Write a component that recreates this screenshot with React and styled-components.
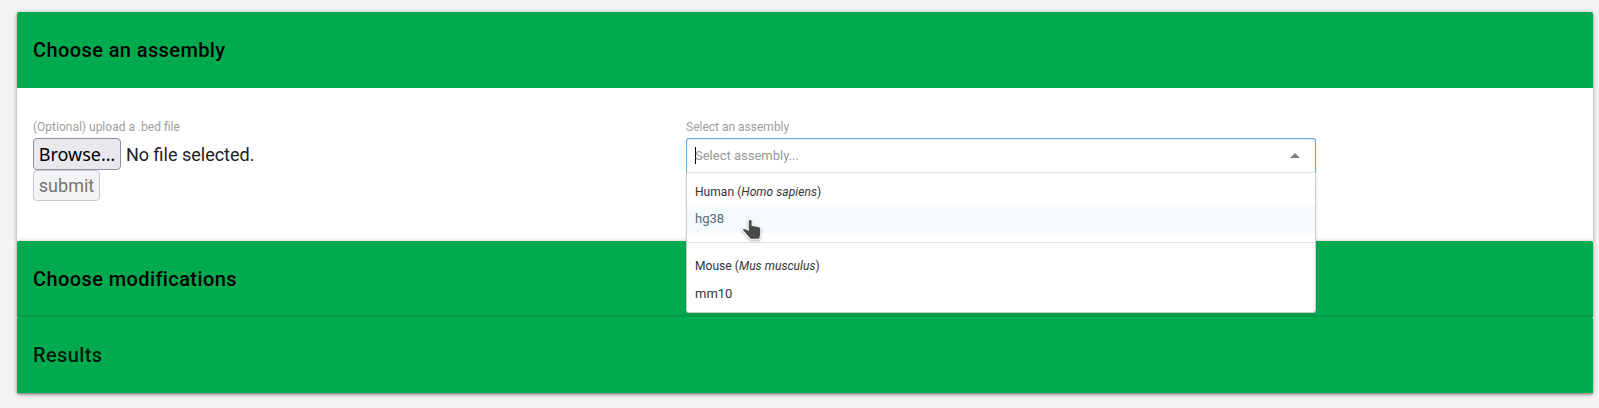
import React from "react";
import styled, { createGlobalStyle } from "styled-components";

const GlobalStyle = createGlobalStyle`
  * { box-sizing: border-box; }
  body {
    margin: 0;
    background: #f4f4f4;
    color: #212121;
    font-family: Roboto, "Liberation Sans", sans-serif;
  }
`;

const Page = styled.main`
  height: 408px;
  padding: 12px 6px 0 17px;
  overflow: hidden;
`;

const Panel = styled.section`
  background: #fff;
  border-radius: 2px 2px 0 0;
  box-shadow: 0 1px 5px 0 rgba(0, 0, 0, 0.35), 0 2px 2px 0 rgba(0, 0, 0, 0.14),
    0 3px 1px -2px rgba(0, 0, 0, 0.12);
`;

const PanelHeader = styled.header`
  display: flex;
  align-items: center;
  height: 76px;
  padding: 0 16px;
  background: #00ab50;
  border-radius: 2px 2px 0 0;
`;

const PanelTitle = styled.h2`
  margin: 0;
  font-size: 20px;
  font-weight: 500;
  line-height: 28px;
  letter-spacing: 0.4px;
  color: ${(p) => (p.$soft ? "rgba(0, 0, 0, 0.87)" : "#000")};
`;

const PanelBody = styled.div`
  display: grid;
  grid-template-columns: 653px 630px;
  height: 153px;
  padding: 30px 16px 0;
`;

const Field = styled.div`
  display: flex;
  flex-direction: column;
  align-items: flex-start;
`;

const Label = styled.label`
  height: 20px;
  line-height: 18px;
  font-size: 12px;
  color: #9e9e9e;
`;

const FileRow = styled.div`
  display: flex;
  align-items: center;
  gap: 5px;
  height: 32px;
  font-size: 18px;
  white-space: nowrap;
`;

const FormButton = styled.button`
  display: flex;
  align-items: center;
  justify-content: center;
  width: ${(p) => p.$width};
  height: ${(p) => p.$height};
  padding: 0;
  border: 1px solid #8f8f9d;
  border-radius: 4px;
  background: #e9e9ed;
  color: #000;
  font: 18px ${(p) => p.$family || "Roboto"}, sans-serif;
  white-space: nowrap;

  &:disabled {
    border-color: #c7c7ce;
    background: #f4f4f6;
    color: #757575;
  }
`;

const Select = styled.div`
  position: relative;
  width: 630px;
  font-size: 13px;
`;

const Control = styled.div`
  display: flex;
  align-items: center;
  height: 35px;
  padding: 0 15px 0 8px;
  border: 1px solid #5fa9e6;
  border-bottom-color: #e6e6e6;
  border-radius: 3px 3px 0 0;
  box-shadow: inset 0 1px 2px rgba(0, 0, 0, 0.1);
  background: #fff;
`;

const Caret = styled.span`
  width: 1px;
  height: 17px;
  margin-right: -1px;
  background: #000;
`;

const Placeholder = styled.span`
  flex: 1;
  color: #999;
`;

const Arrow = styled.span`
  border: 5px solid transparent;
  border-top: 0;
  border-bottom-color: #808080;
  margin-top: -1px;
`;

const Menu = styled.div`
  position: absolute;
  z-index: 2;
  top: 35px;
  left: 0;
  width: 100%;
  height: 140px;
  border: 1px solid #ccc;
  border-top: 0;
  border-radius: 0 0 3px 3px;
  background: #fff;
  box-shadow: 0 1px 3px rgba(0, 0, 0, 0.12);
`;

const Group = styled.div`
  height: ${(p) => (p.$divided ? "70px" : "69px")};
  padding-top: ${(p) => (p.$divided ? "9px" : "4px")};
  border-top: ${(p) => (p.$divided ? "1px solid #e0e0e0" : "0")};
`;

const GroupTitle = styled.div`
  height: 28px;
  padding: 0 8px;
  line-height: ${(p) => (p.$lowered ? "31px" : "29px")};
  font-size: 12px;
  color: #333;
  letter-spacing: 0.05px;
`;

const Option = styled.div`
  height: 28px;
  padding: 0 8px;
  line-height: 27px;
  color: ${(p) => (p.$focused ? "#556b78" : "#333")};
  background: ${(p) => (p.$focused ? "#f5fafd" : "transparent")};
`;

const Pointer = styled.svg`
  position: absolute;
  z-index: 3;
  top: 78px;
  left: 55px;
  width: 22px;
  height: 25px;
  filter: drop-shadow(0 1px 1px rgba(0, 0, 0, 0.3));
`;

export default function App() {
  return (
    <>
      <GlobalStyle />
      <Page>
        <Panel>
          <PanelHeader>
            <PanelTitle>Choose an assembly</PanelTitle>
          </PanelHeader>
          <PanelBody>
            <Field>
              <Label>(Optional) upload a .bed file</Label>
              <FileRow>
                <FormButton $width="88px" $height="32px" $family='"Noto Sans"'>Browse…</FormButton>
                <span>No file selected.</span>
              </FileRow>
              <FormButton $width="67px" $height="31px" disabled>submit</FormButton>
            </Field>
            <Field>
              <Label>Select an assembly</Label>
              <Select>
                <Control>
                  <Caret />
                  <Placeholder>Select assembly...</Placeholder>
                  <Arrow />
                </Control>
                <Menu>
                  <Group>
                    <GroupTitle $lowered>Human (<i>Homo sapiens</i>)</GroupTitle>
                    <Option $focused>hg38</Option>
                  </Group>
                  <Group $divided>
                    <GroupTitle>Mouse (<i>Mus musculus</i>)</GroupTitle>
                    <Option>mm10</Option>
                  </Group>
                </Menu>
                <Pointer viewBox="0 0 22 25">
                  <path
                    d="M7.800 5Q7.800 4 9.200 4Q10.600 4 10.600 5V9.800L17.500 11Q19.200 11.300 19.200 13V18L18.200 22.700H9.500L8 21L2 14Q1.600 13 3 12.900Q4.800 12.900 7.800 15Z"
                    fill="#4a4a4a"
                    stroke="#fff"
                    strokeWidth="2"
                    strokeLinejoin="round"
                    paintOrder="stroke"
                  />
                </Pointer>
              </Select>
            </Field>
          </PanelBody>
        </Panel>
        <Panel>
          <PanelHeader>
            <PanelTitle>Choose modifications</PanelTitle>
          </PanelHeader>
        </Panel>
        <Panel>
          <PanelHeader>
            <PanelTitle $soft>Results</PanelTitle>
          </PanelHeader>
        </Panel>
      </Page>
    </>
  );
}
